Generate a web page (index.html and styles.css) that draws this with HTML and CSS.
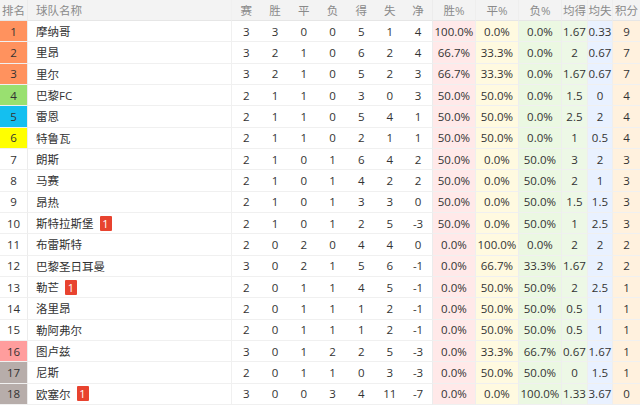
FILE: index.html
```html
<!DOCTYPE html>
<html lang="zh-CN">
<head>
<meta charset="utf-8">
<link rel="stylesheet" href="styles.css">
</head>
<body>
<div class="table" id="t">
  <div class="row head">
    <div class="c rank">排名</div><div class="c name">球队名称</div>
    <div class="c n">赛</div><div class="c n">胜</div><div class="c n">平</div><div class="c n">负</div><div class="c n">得</div><div class="c n">失</div><div class="c n last">净</div>
    <div class="c p">胜%</div><div class="c p">平%</div><div class="c p">负%</div>
    <div class="c a">均得</div><div class="c a">均失</div><div class="c pts">积分</div>
  </div>
</div>
<script src="app.js"></script>
</body>
</html>
```
FILE: app.js
```js
const rows = [
 [1,"摩纳哥",0,"3 3 0 0 5 1 4","100.0% 0.0% 0.0%","1.67 0.33 9","orange"],
 [2,"里昂",0,"3 2 1 0 6 2 4","66.7% 33.3% 0.0%","2 0.67 7","orange"],
 [3,"里尔",0,"3 2 1 0 5 2 3","66.7% 33.3% 0.0%","1.67 0.67 7","orange"],
 [4,"巴黎FC",0,"2 1 1 0 3 0 3","50.0% 50.0% 0.0%","1.5 0 4","green"],
 [5,"雷恩",0,"2 1 1 0 5 4 1","50.0% 50.0% 0.0%","2.5 2 4","cyan"],
 [6,"特鲁瓦",0,"2 1 1 0 2 1 1","50.0% 50.0% 0.0%","1 0.5 4","yellow"],
 [7,"朗斯",0,"2 1 0 1 6 4 2","50.0% 0.0% 50.0%","3 2 3",""],
 [8,"马赛",0,"2 1 0 1 4 2 2","50.0% 0.0% 50.0%","2 1 3",""],
 [9,"昂热",0,"2 1 0 1 3 3 0","50.0% 0.0% 50.0%","1.5 1.5 3",""],
 [10,"斯特拉斯堡",1,"2 1 0 1 2 5 -3","50.0% 0.0% 50.0%","1 2.5 3",""],
 [11,"布雷斯特",0,"2 0 2 0 4 4 0","0.0% 100.0% 0.0%","2 2 2",""],
 [12,"巴黎圣日耳曼",0,"3 0 2 1 5 6 -1","0.0% 66.7% 33.3%","1.67 2 2",""],
 [13,"勒芒",1,"2 0 1 1 4 5 -1","0.0% 50.0% 50.0%","2 2.5 1",""],
 [14,"洛里昂",0,"2 0 1 1 1 2 -1","0.0% 50.0% 50.0%","0.5 1 1",""],
 [15,"勒阿弗尔",0,"2 0 1 1 1 2 -1","0.0% 50.0% 50.0%","0.5 1 1",""],
 [16,"图卢兹",0,"3 0 1 2 2 5 -3","0.0% 33.3% 66.7%","0.67 1.67 1","pink"],
 [17,"尼斯",0,"2 0 1 1 0 3 -3","0.0% 50.0% 50.0%","0 1.5 1","gray"],
 [18,"欧塞尔",1,"3 0 0 3 4 11 -7","0.0% 0.0% 100.0%","1.33 3.67 0","gray"]
];
const t = document.getElementById("t");
for (const [r, name, badge, nums, pcts, avg, col] of rows) {
  const row = document.createElement("div");
  row.className = "row";
  let h = `<div class="c rank ${col}">${r}</div><div class="c name">${name}${badge ? '<span class="badge">1</span>' : ''}</div>`;
  const ns = nums.split(" ");
  ns.forEach((v, i) => { h += `<div class="c n${i === 6 ? ' last' : ''}">${v}</div>`; });
  const ps = pcts.split(" ");
  h += `<div class="c p win">${ps[0]}</div><div class="c p draw">${ps[1]}</div><div class="c p loss">${ps[2]}</div>`;
  const as = avg.split(" ");
  h += `<div class="c a gf">${as[0]}</div><div class="c a ga">${as[1]}</div><div class="c pts">${as[2]}</div>`;
  row.innerHTML = h;
  t.appendChild(row);
}
```
FILE: styles.css
```css
html, body { margin: 0; padding: 0; background: #fff; }
body {
  font-family: "Open Sans", "Noto Sans CJK SC", sans-serif;
  font-size: 11.5px;
  color: #333;
}
.table {
  width: 640px;
  height: 405px;
  display: grid;
  grid-template-columns: 28px 204px repeat(7, 28.71px) 43px 43px 43px 26px 25px 27px;
  grid-template-rows: 21px repeat(18, 1fr);
}
.row { display: contents; }
.c {
  display: flex;
  align-items: center;
  justify-content: center;
  border-bottom: 1px solid #f0f0f0;
  white-space: nowrap;
  overflow: hidden;
}
.head .c { background: #f3f3f3; color: #8a8a8a; border-bottom: 1px solid #e6e6e6; }
.rank { border-right: 1px solid #ececec; }
.name { justify-content: flex-start; padding-left: 8px; font-size: 11.5px; }
.n.last { border-right: 1px solid #ececec; }
.name { border-right: 1px solid #f0f0f0; }
.p, .a { border-right: 1px solid #eeeeee; }

.orange { background: #ff925e; }
.green { background: #99e070; }
.cyan { background: #14bff0; }
.yellow { background: #ffff00; }
.pink { background: #ff9d9d; }
.gray { background: #b7adaa; }

.win { background: #ffe9e9; }
.draw { background: #fffae0; }
.loss { background: #ebf8e2; }
.gf { background: #edf8e6; }
.ga { background: #e9f1ff; }
.row:not(.head) .pts { background: #fff1de; }

.badge {
  display: inline-flex;
  align-items: center;
  justify-content: center;
  width: 12px;
  height: 15px;
  margin-left: 6px;
  background: #e8432f;
  color: #fff;
  font-size: 11px;
  border-radius: 1px;
}
```
